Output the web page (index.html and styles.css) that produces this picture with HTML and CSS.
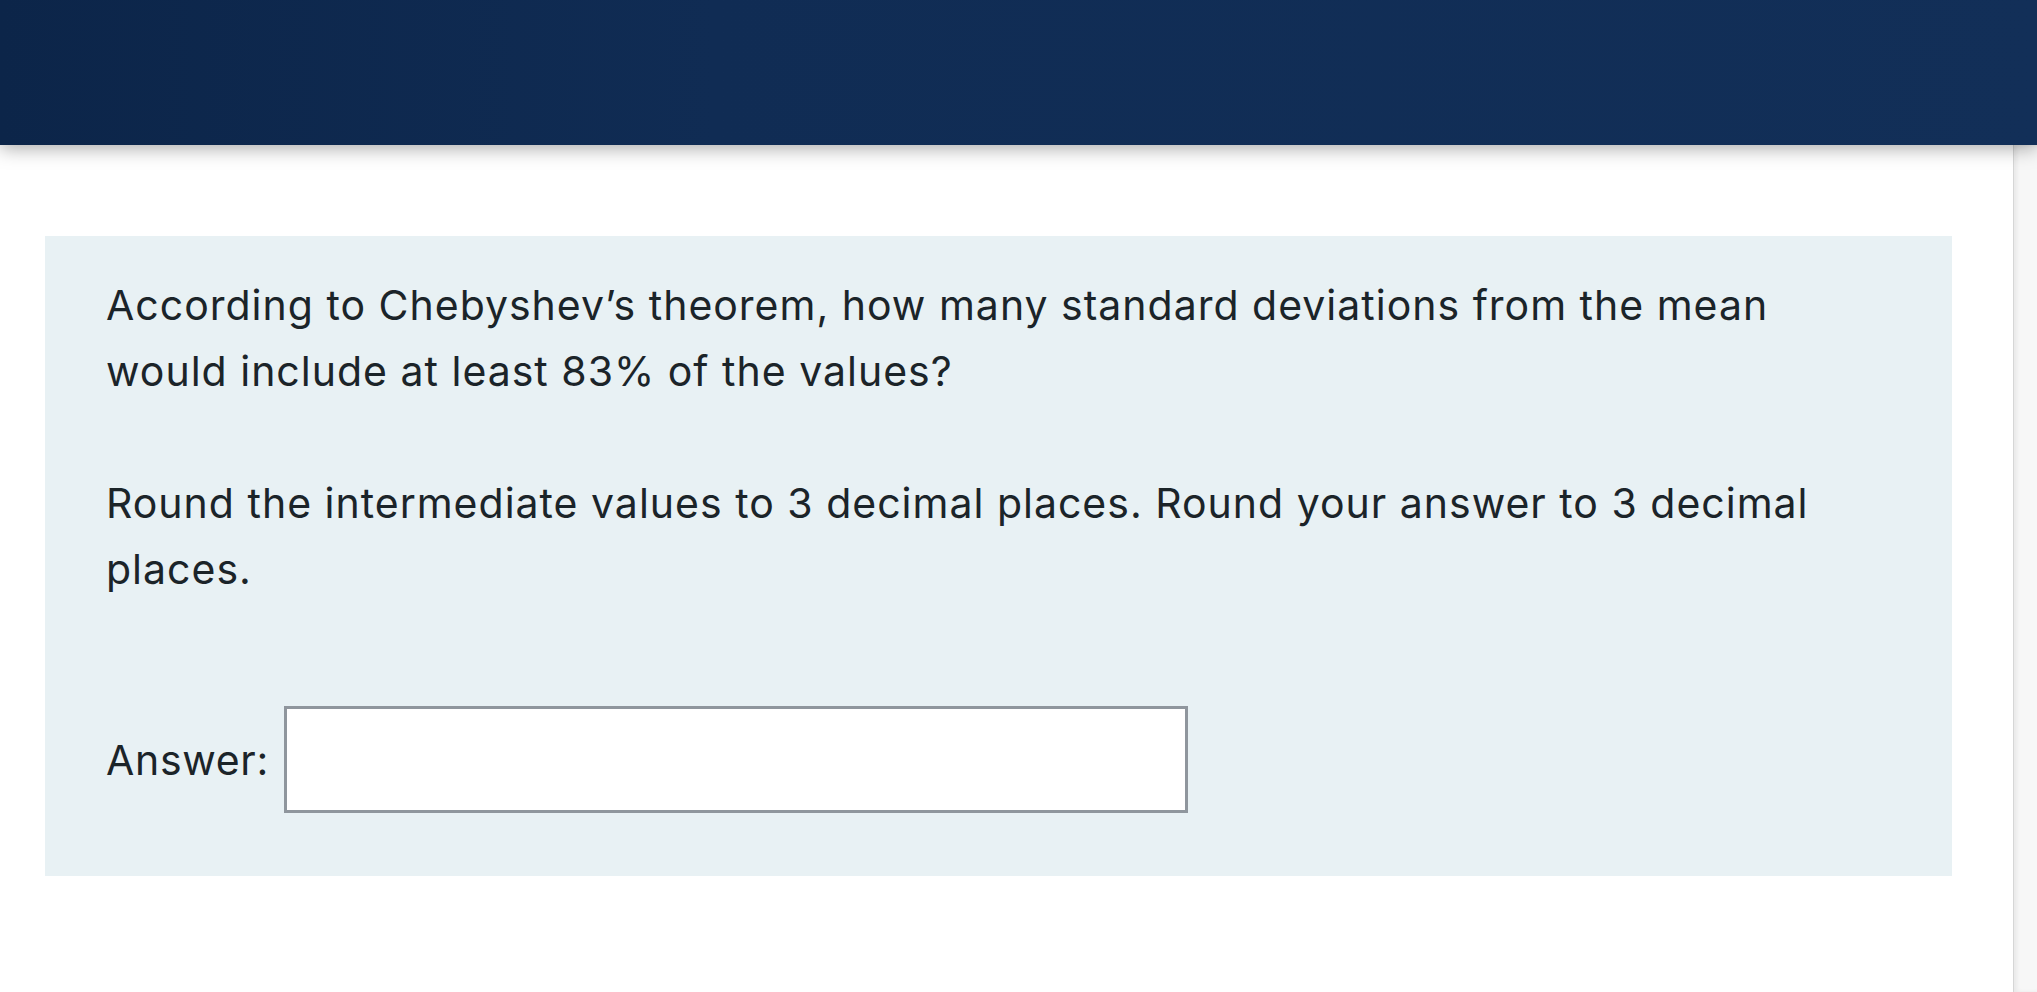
FILE: index.html
```html
<!DOCTYPE html>
<html lang="en">
<head>
    <meta charset="UTF-8">
    <meta name="viewport" content="width=device-width, initial-scale=1.0">
    <title>Question</title>
    <link rel="stylesheet" href="styles.css">
</head>
<body>
    <header class="topbar"></header>

    <div class="page">
        <main class="content">
            <div class="question-box">
                <p class="question-text">According to Chebyshev’s theorem, how many standard deviations from the mean would include at least 83% of the values?</p>
                <p class="question-text">Round the intermediate values to 3 decimal places. Round your answer to 3 decimal places.</p>

                <div class="answer-row">
                    <label for="answer">Answer:</label>
                    <input type="text" id="answer" class="answer-input">
                </div>
            </div>
        </main>
        <aside class="side-rail"></aside>
    </div>
</body>
</html>
```

FILE: styles.css
```css
html, body {
    height: 100%;
}

body {
    margin: 0;
    font-family: Inter, "Liberation Sans", Arial, sans-serif;
    color: #1b2429;
    background-color: #fff;
    overflow: hidden;
}

.topbar {
    position: relative;
    z-index: 2;
    height: 145px;
    background: linear-gradient(90deg, #0c2549 0%, #102c54 35%, #122f58 100%);
    box-shadow: 0 3px 18px rgba(0, 0, 0, 0.35);
}

.page {
    display: flex;
    height: calc(100% - 145px);
}

.content {
    flex: 1;
    padding: 91px 61px 0 45px;
}

.side-rail {
    width: 23px;
    background-color: #f7f7f7;
    border-left: 1px solid #d6d6d6;
    box-shadow: inset 3px 0 4px rgba(0, 0, 0, 0.06);
}

.question-box {
    background-color: #e8f1f4;
    padding: 36px 61px 63px 61px;
}

.question-text {
    margin: 0 0 66px 0;
    max-width: 1735px;
    font-size: 41px;
    letter-spacing: 1px;
    line-height: 66px;
}

.answer-row {
    display: flex;
    align-items: center;
    gap: 15px;
    margin-top: 104px;
}

.answer-row label {
    font-size: 41px;
    letter-spacing: 0.7px;
}

.answer-input {
    width: 898px;
    height: 101px;
    box-sizing: content-box;
    padding: 0;
    margin: 0;
    border: 3px solid #8f969d;
    background-color: #fff;
    font-size: 36px;
    font-family: inherit;
}
```
